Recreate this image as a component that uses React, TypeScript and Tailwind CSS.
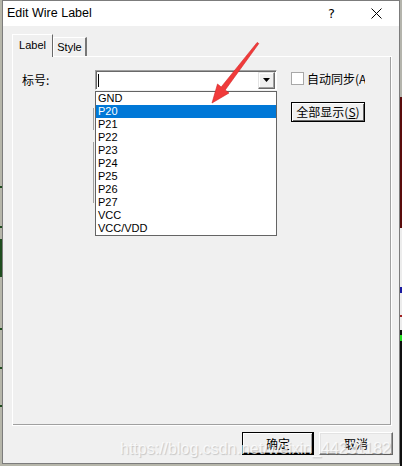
import React from "react";

const items = ["GND", "P20", "P21", "P22", "P23", "P24", "P25", "P26", "P27", "VCC", "VCC/VDD"];

export default function App() {
  return (
    <div className="relative w-[402px] h-[466px] overflow-hidden bg-[#b6b6aa] font-['Liberation_Sans','Noto_Sans_CJK_SC',sans-serif] text-black">
      {/* background schematic bits outside the window */}
      <div className="absolute right-0 top-0 w-[2px] h-[466px] flex flex-col">
        <div className="h-[97px] bg-[#b4b4ac]" />
        <div className="h-[131px] bg-[#5a0c0c]" />
        <div className="h-[59px] bg-[#ececec]" />
        <div className="h-[6px] bg-[#1a1aa0]" />
        <div className="h-[22px] bg-[#ececec]" />
        <div className="h-[2px] bg-[#a02020]" />
        <div className="h-[13px] bg-[#ececec]" />
        <div className="h-[5px] bg-[#101010]" />
        <div className="h-[6px] bg-[#22dd22]" />
        <div className="flex-1 bg-[#101010]" />
      </div>
      <div className="absolute left-0 top-[186px] w-[2px] h-[2px] bg-[#1f4d1f]" />
      <div className="absolute left-0 top-[226px] w-[2px] h-[2px] bg-[#1f4d1f]" />
      <div className="absolute left-0 top-[239px] w-[2px] h-[38px] bg-[#1f4d1f]" />
      <div className="absolute left-0 top-[328px] w-[2px] h-[2px] bg-[#1f4d1f]" />
      <div className="absolute left-0 top-[367px] w-[2px] h-[2px] bg-[#1f4d1f]" />
      <div className="absolute left-0 top-[405px] w-[2px] h-[2px] bg-[#1f4d1f]" />

      {/* window */}
      <div className="ml-[2px] w-[398px] h-[464px] border border-[#7c7c7c] bg-[#f0f0f0] flex flex-col">
        {/* title bar */}
        <div className="h-[25px] bg-white flex items-center">
          <span className="pl-[4px] text-[12.5px] font-['Liberation_Sans',sans-serif]">Edit Wire Label</span>
          <div className="flex-1" />
          <div className="w-[45px] h-full flex items-center justify-center text-[13px] font-['DejaVu_Sans',sans-serif] pt-[1px]">?</div>
          <div className="w-[45px] h-full flex items-center justify-center">
            <svg width="11" height="11" viewBox="0 0 11 11">
              <path d="M0.5 0.5 L10.5 10.5 M10.5 0.5 L0.5 10.5" stroke="#000" strokeWidth="1" fill="none" />
            </svg>
          </div>
        </div>

        {/* body */}
        <div className="flex-1 pt-[8px] pl-[9px] pr-[6px] flex flex-col">
          {/* tabs */}
          <div className="h-[22px] flex items-end">
            <div className="relative z-10 -mb-px w-[41px] h-[23px] bg-[#f0f0f0] border-t border-l border-white border-r border-r-[#696969] flex items-center justify-center text-[11px] pb-[1px]">
              Label
            </div>
            <div className="w-[34px] h-[19px] border-t border-l border-white border-r-2 border-r-[#777] flex items-center justify-center text-[11px]">
              Style
            </div>
          </div>

          {/* panel */}
          <div className="relative w-[380px] h-[370px] border-t border-l border-white border-r border-b border-[#696969] shadow-[inset_-1px_-1px_0_#a0a0a0] pt-[13px] pl-[9px]">
            {/* edges of controls hidden behind the open list */}
            <div className="absolute left-[80px] top-[51px] w-px h-[22px] bg-[#a0a0a0]" />
            <div className="absolute left-[80px] top-[85px] w-px h-[61px] bg-[#a0a0a0]" />

            <div className="flex items-start">
              <div className="w-[73px] h-[20px] flex items-center text-[12px] font-['Noto_Sans_CJK_SC',sans-serif]">标号:</div>

              {/* combo box */}
              <div className="relative z-10 w-[182px] h-[20px]">
                <div className="w-full h-full border-t border-l border-[#a0a0a0] border-r border-b border-r-white border-b-white shadow-[inset_1px_1px_0_#696969] bg-white flex items-center justify-between pl-[2px] pr-[1px]">
                  <div className="w-px h-[13px] bg-black" />
                  <div className="w-[17px] h-[17px] bg-[#f0f0f0] border-t border-l border-[#e3e3e3] border-r border-b border-r-[#696969] border-b-[#696969] shadow-[inset_-1px_-1px_0_#a0a0a0,inset_1px_1px_0_#fff] flex items-center justify-center">
                    <svg width="7" height="4" viewBox="0 0 7 4">
                      <path d="M0 0 H7 L3.5 4 Z" fill="#000" />
                    </svg>
                  </div>
                </div>
                {/* open list */}
                <div className="absolute left-0 top-[21px] w-[182px] bg-white border border-[#646464]">
                  {items.map((it) => (
                    <div
                      key={it}
                      className={
                        it === "P20"
                          ? "h-[13px] leading-[13px] text-[11px] pl-[2px] bg-[#0078d7] text-white"
                          : "h-[13px] leading-[13px] text-[11px] pl-[2px]"
                      }
                    >
                      {it}
                    </div>
                  ))}
                </div>
              </div>

              {/* right column */}
              <div className="ml-[14px] w-[74px] overflow-hidden pt-[2px] flex flex-col">
                <div className="h-[13px] flex items-center gap-[3px] whitespace-nowrap">
                  <div className="w-[13px] h-[13px] shrink-0 bg-white border border-[#a8a8a8]" />
                  <span className="text-[12px] leading-[13px] font-['Noto_Sans_CJK_SC',sans-serif]">自动同步(A</span>
                </div>
                <div className="mt-[17px] w-[74px] h-[20px] border border-black shadow-[inset_1px_1px_0_#fff,inset_-1px_-1px_0_#696969] bg-[#f0f0f0] flex items-center justify-center text-[12px] font-['Noto_Sans_CJK_SC',sans-serif]">
                  全部显示(<span className="underline">S</span>)
                </div>
              </div>
            </div>
          </div>

          {/* footer */}
          <div className="mt-[6px] flex justify-end gap-[5px]">
            <div className="w-[72px] h-[23px] bg-[#f0f0f0] border border-black shadow-[inset_-1px_-1px_0_#000,inset_1px_1px_0_#fff,inset_-2px_-2px_0_#a0a0a0] flex items-center justify-center text-[12px] font-['Noto_Sans_CJK_SC',sans-serif]">
              确定
            </div>
            <div className="w-[74px] h-[23px] bg-[#f0f0f0] border-t border-l border-white border-r border-b border-r-[#696969] border-b-[#696969] shadow-[inset_-1px_-1px_0_#a0a0a0,inset_1px_1px_0_#e3e3e3] flex items-center justify-center text-[12px] font-['Noto_Sans_CJK_SC',sans-serif]">
              取消
            </div>
          </div>
        </div>
      </div>

      {/* red annotation arrow */}
      <svg className="absolute left-0 top-0 z-20 pointer-events-none" width="402" height="466" viewBox="0 0 402 466">
        <polygon
          points="212,103 229,93 225.2,90 258.8,43.6 257.2,42.4 221.2,87 217.5,84"
          fill="#f03a3a"
          stroke="#d42424"
          strokeWidth="0.6"
          strokeLinejoin="round"
        />
      </svg>

      {/* watermark */}
      <div className="absolute z-20 left-[120px] top-[437px] text-[16px] whitespace-nowrap text-white/75 [text-shadow:1px_1px_1px_rgba(0,0,0,0.18)] pointer-events-none font-['Liberation_Sans',sans-serif]">
        https://blog.csdn.net/weixin_44231182
      </div>
    </div>
  );
}
